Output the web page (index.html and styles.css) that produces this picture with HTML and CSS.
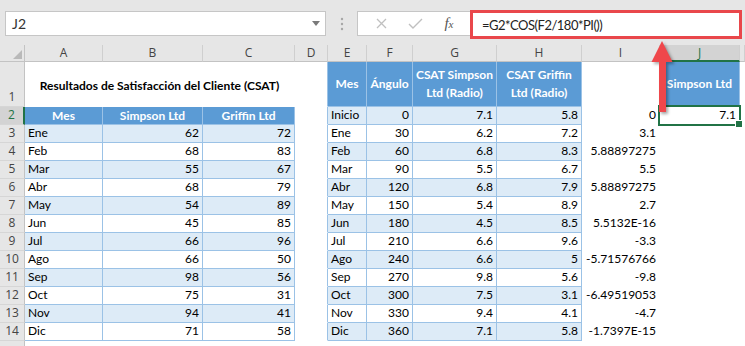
FILE: index.html
```html
<!DOCTYPE html>
<html lang="es">
<head>
    <meta charset="UTF-8">
    <meta name="viewport" content="width=device-width, initial-scale=1.0">
    <title>CSAT - Coordenadas</title>
    <link rel="stylesheet" href="styles.css">
</head>
<body>
<div class="page">
    <div class="toolbar">
        <div class="name-box">
            <span>J2</span>
            <svg class="caret" width="8" height="5" viewBox="0 0 8 5"><path d="M0 0h8L4 5z" fill="#7a7a7a"/></svg>
        </div>
        <div class="grip">
            <svg width="4" height="14" viewBox="0 0 4 14"><circle cx="2" cy="2" r="1.2" fill="#a6a6a6"/><circle cx="2" cy="7" r="1.2" fill="#a6a6a6"/><circle cx="2" cy="12" r="1.2" fill="#a6a6a6"/></svg>
        </div>
        <div class="fx-buttons">
            <svg width="11" height="11" viewBox="0 0 11 11"><path d="M1 1l9 9M10 1l-9 9" stroke="#c0c0c0" stroke-width="1.3" fill="none"/></svg>
            <svg width="15" height="11" viewBox="0 0 15 11"><path d="M1 6l4 4 9-9" stroke="#c0c0c0" stroke-width="1.4" fill="none"/></svg>
            <span class="fx">f<small>x</small></span>
        </div>
        <div class="formula">=G2*COS(F2/180*PI())</div>
    </div>

    <div class="sheet">
        <div class="row rhead">
            <div class="c corner"><svg width="9" height="9" viewBox="0 0 9 9"><path d="M9 0v9H0z" fill="#b9b9b9"/></svg></div>
            <div class="c ch">A</div>
            <div class="c ch">B</div>
            <div class="c ch">C</div>
            <div class="c ch">D</div>
            <div class="c ch">E</div>
            <div class="c ch">F</div>
            <div class="c ch">G</div>
            <div class="c ch">H</div>
            <div class="c ch">I</div>
            <div class="c ch on">J</div>
            <div class="c ch"></div>
        </div>

        <div class="row r1">
            <div class="c rh">1</div>
            <div class="c title">Resultados de Satisfacción del Cliente (CSAT)</div>
            <div class="c dl"></div>
            <div class="c t hd">Mes</div>
            <div class="c t hd">Ángulo</div>
            <div class="c t hd">CSAT Simpson<br>Ltd (Radio)</div>
            <div class="c t hd">CSAT Griffin<br>Ltd (Radio)</div>
            <div class="c"></div>
            <div class="c t hd">Simpson Ltd</div>
            <div class="c"></div>
        </div>

        <div class="row">
            <div class="c rh on">2</div>
            <div class="c t hd">Mes</div>
            <div class="c t hd">Simpson Ltd</div>
            <div class="c t hd">Griffin Ltd</div>
            <div class="c dl"></div>
            <div class="c t b">Inicio</div>
            <div class="c t b n">0</div>
            <div class="c t b n">7.1</div>
            <div class="c t b n">5.8</div>
            <div class="c n">0</div>
            <div class="c n sel">7.1</div>
            <div class="c"></div>
        </div>

        <div class="row">
            <div class="c rh">3</div>
            <div class="c t b">Ene</div>
            <div class="c t b n">62</div>
            <div class="c t b n">72</div>
            <div class="c dl"></div>
            <div class="c t">Ene</div>
            <div class="c t n">30</div>
            <div class="c t n">6.2</div>
            <div class="c t n">7.2</div>
            <div class="c n">3.1</div>
            <div class="c"></div>
            <div class="c"></div>
        </div>

        <div class="row">
            <div class="c rh">4</div>
            <div class="c t">Feb</div>
            <div class="c t n">68</div>
            <div class="c t n">83</div>
            <div class="c dl"></div>
            <div class="c t b">Feb</div>
            <div class="c t b n">60</div>
            <div class="c t b n">6.8</div>
            <div class="c t b n">8.3</div>
            <div class="c n">5.88897275</div>
            <div class="c"></div>
            <div class="c"></div>
        </div>

        <div class="row">
            <div class="c rh">5</div>
            <div class="c t b">Mar</div>
            <div class="c t b n">55</div>
            <div class="c t b n">67</div>
            <div class="c dl"></div>
            <div class="c t">Mar</div>
            <div class="c t n">90</div>
            <div class="c t n">5.5</div>
            <div class="c t n">6.7</div>
            <div class="c n">5.5</div>
            <div class="c"></div>
            <div class="c"></div>
        </div>

        <div class="row">
            <div class="c rh">6</div>
            <div class="c t">Abr</div>
            <div class="c t n">68</div>
            <div class="c t n">79</div>
            <div class="c dl"></div>
            <div class="c t b">Abr</div>
            <div class="c t b n">120</div>
            <div class="c t b n">6.8</div>
            <div class="c t b n">7.9</div>
            <div class="c n">5.88897275</div>
            <div class="c"></div>
            <div class="c"></div>
        </div>

        <div class="row">
            <div class="c rh">7</div>
            <div class="c t b">May</div>
            <div class="c t b n">54</div>
            <div class="c t b n">89</div>
            <div class="c dl"></div>
            <div class="c t">May</div>
            <div class="c t n">150</div>
            <div class="c t n">5.4</div>
            <div class="c t n">8.9</div>
            <div class="c n">2.7</div>
            <div class="c"></div>
            <div class="c"></div>
        </div>

        <div class="row">
            <div class="c rh">8</div>
            <div class="c t">Jun</div>
            <div class="c t n">45</div>
            <div class="c t n">85</div>
            <div class="c dl"></div>
            <div class="c t b">Jun</div>
            <div class="c t b n">180</div>
            <div class="c t b n">4.5</div>
            <div class="c t b n">8.5</div>
            <div class="c n">5.5132E-16</div>
            <div class="c"></div>
            <div class="c"></div>
        </div>

        <div class="row">
            <div class="c rh">9</div>
            <div class="c t b">Jul</div>
            <div class="c t b n">66</div>
            <div class="c t b n">96</div>
            <div class="c dl"></div>
            <div class="c t">Jul</div>
            <div class="c t n">210</div>
            <div class="c t n">6.6</div>
            <div class="c t n">9.6</div>
            <div class="c n">-3.3</div>
            <div class="c"></div>
            <div class="c"></div>
        </div>

        <div class="row">
            <div class="c rh">10</div>
            <div class="c t">Ago</div>
            <div class="c t n">66</div>
            <div class="c t n">50</div>
            <div class="c dl"></div>
            <div class="c t b">Ago</div>
            <div class="c t b n">240</div>
            <div class="c t b n">6.6</div>
            <div class="c t b n">5</div>
            <div class="c n">-5.71576766</div>
            <div class="c"></div>
            <div class="c"></div>
        </div>

        <div class="row">
            <div class="c rh">11</div>
            <div class="c t b">Sep</div>
            <div class="c t b n">98</div>
            <div class="c t b n">56</div>
            <div class="c dl"></div>
            <div class="c t">Sep</div>
            <div class="c t n">270</div>
            <div class="c t n">9.8</div>
            <div class="c t n">5.6</div>
            <div class="c n">-9.8</div>
            <div class="c"></div>
            <div class="c"></div>
        </div>

        <div class="row">
            <div class="c rh">12</div>
            <div class="c t">Oct</div>
            <div class="c t n">75</div>
            <div class="c t n">31</div>
            <div class="c dl"></div>
            <div class="c t b">Oct</div>
            <div class="c t b n">300</div>
            <div class="c t b n">7.5</div>
            <div class="c t b n">3.1</div>
            <div class="c n">-6.49519053</div>
            <div class="c"></div>
            <div class="c"></div>
        </div>

        <div class="row">
            <div class="c rh">13</div>
            <div class="c t b">Nov</div>
            <div class="c t b n">94</div>
            <div class="c t b n">41</div>
            <div class="c dl"></div>
            <div class="c t">Nov</div>
            <div class="c t n">330</div>
            <div class="c t n">9.4</div>
            <div class="c t n">4.1</div>
            <div class="c n">-4.7</div>
            <div class="c"></div>
            <div class="c"></div>
        </div>

        <div class="row">
            <div class="c rh">14</div>
            <div class="c t">Dic</div>
            <div class="c t n">71</div>
            <div class="c t n">58</div>
            <div class="c dl"></div>
            <div class="c t b">Dic</div>
            <div class="c t b n">360</div>
            <div class="c t b n">7.1</div>
            <div class="c t b n">5.8</div>
            <div class="c n">-1.7397E-15</div>
            <div class="c"></div>
            <div class="c"></div>
        </div>

        <div class="row">
            <div class="c rh"></div>
            <div class="c"></div>
            <div class="c"></div>
            <div class="c"></div>
            <div class="c"></div>
            <div class="c"></div>
            <div class="c"></div>
            <div class="c"></div>
            <div class="c"></div>
            <div class="c"></div>
            <div class="c"></div>
            <div class="c"></div>
        </div>
    </div>

    <!-- callout arrow pointing at the formula -->
    <svg class="arrow" width="40" height="82" viewBox="0 0 40 82">
        <path d="M17 3L27.5 24H21V74H14V24H6.5z" fill="#ef474b"/>
    </svg>
</div>
</body>
</html>
```

FILE: styles.css
```css
* {
    margin: 0;
    padding: 0;
    box-sizing: border-box;
}

body {
    font-family: Lato, "Open Sans", sans-serif;
    background-color: #fff;
    width: 745px;
    height: 346px;
    overflow: hidden;
}

.page {
    position: relative;
    width: 745px;
    height: 346px;
    overflow: hidden;
}

/* formula bar */
.toolbar {
    height: 45px;
    background-color: #e6e6e6;
    display: flex;
    align-items: flex-start;
    padding: 11px 0 0 5px;
}

.name-box {
    width: 321px;
    height: 25px;
    background-color: #fff;
    border: 1px solid #c6c6c6;
    display: flex;
    align-items: center;
    justify-content: space-between;
    padding: 0 5px 0 6px;
    font-size: 14px;
    color: #333;
}

.grip {
    width: 31px;
    height: 25px;
    display: flex;
    align-items: center;
    justify-content: center;
}

.fx-buttons {
    width: 113px;
    height: 25px;
    background-color: #fff;
    border: 1px solid #c6c6c6;
    border-right: none;
    display: flex;
    align-items: center;
    justify-content: space-around;
    padding: 0 6px 0 8px;
}

.fx {
    font-family: "Liberation Serif", serif;
    font-style: italic;
    font-size: 15px;
    color: #555;
}

.fx small {
    font-size: 11px;
}

.formula {
    width: 272px;
    height: 29px;
    margin-top: -1px;
    background-color: #fff;
    border: 3px solid #e9474b;
    display: flex;
    align-items: center;
    padding-left: 9px;
    font-size: 13px;
    letter-spacing: -0.5px;
    color: #222;
}

/* grid */
.row {
    display: grid;
    grid-template-columns: 25px 78px 100px 92px 33px 39px 46px 84px 85px 78px 80px 5px;
    height: 18px;
}

.rhead {
    height: 17px;
}

.r1 {
    height: 45px;
}

.c {
    display: flex;
    align-items: flex-end;
    padding: 0 3px 1px;
    border-right: 1px solid transparent;
    border-bottom: 1px solid transparent;
    font-size: 12px;
    line-height: 16px;
    color: #000;
    white-space: nowrap;
    overflow: hidden;
}

.corner {
    background-color: #e6e6e6;
    border-right: 1px solid #c3c3c3;
    border-bottom: 1px solid #c3c3c3;
    justify-content: flex-end;
    padding: 0 2px 2px 0;
}

.ch {
    background-color: #e6e6e6;
    border-right: 1px solid #cfcfcf;
    border-bottom: 1px solid #c3c3c3;
    justify-content: center;
    align-items: center;
    padding: 0;
    font-family: "Open Sans", sans-serif;
    font-size: 12px;
    color: #444;
}

.ch.on {
    background-color: #d3d3d3;
    border-bottom: 2px solid #217346;
    color: #217346;
}

.rh {
    background-color: #e6e6e6;
    border-right: 1px solid #c3c3c3;
    border-bottom: 1px solid #d6d6d6;
    justify-content: center;
    padding: 0 0 1px;
    font-family: "Open Sans", sans-serif;
    font-size: 12px;
    color: #444;
}

.rh.on {
    background-color: #d3d3d3;
    border-right: 2px solid #217346;
    color: #217346;
}

.title {
    grid-column: span 3;
    justify-content: center;
    align-items: center;
    padding-top: 5px;
    font-weight: bold;
    font-size: 12px;
}

.dl {
    border-right-color: #9bc2e6;
}

.t {
    border-right-color: #9bc2e6;
    border-bottom-color: #9bc2e6;
}

.b {
    background-color: #ddebf7;
}

.n {
    justify-content: flex-end;
}

.hd {
    background-color: #5b9bd5;
    color: #fff;
    font-weight: bold;
    justify-content: center;
    align-items: center;
    text-align: center;
    line-height: 18px;
    padding: 0 2px;
}

.sel {
    position: relative;
    overflow: visible;
}

.sel::after {
    content: "";
    position: absolute;
    left: -2px;
    top: -2px;
    right: -2px;
    bottom: -2px;
    border: 2px solid #217346;
}

.sel::before {
    content: "";
    position: absolute;
    right: -4px;
    bottom: -4px;
    width: 6px;
    height: 6px;
    background-color: #217346;
    border: 1px solid #fff;
    z-index: 1;
}

.arrow {
    position: absolute;
    left: 645px;
    top: 38px;
    filter: drop-shadow(2px 2px 1.5px rgba(0, 0, 0, 0.35));
}
```
